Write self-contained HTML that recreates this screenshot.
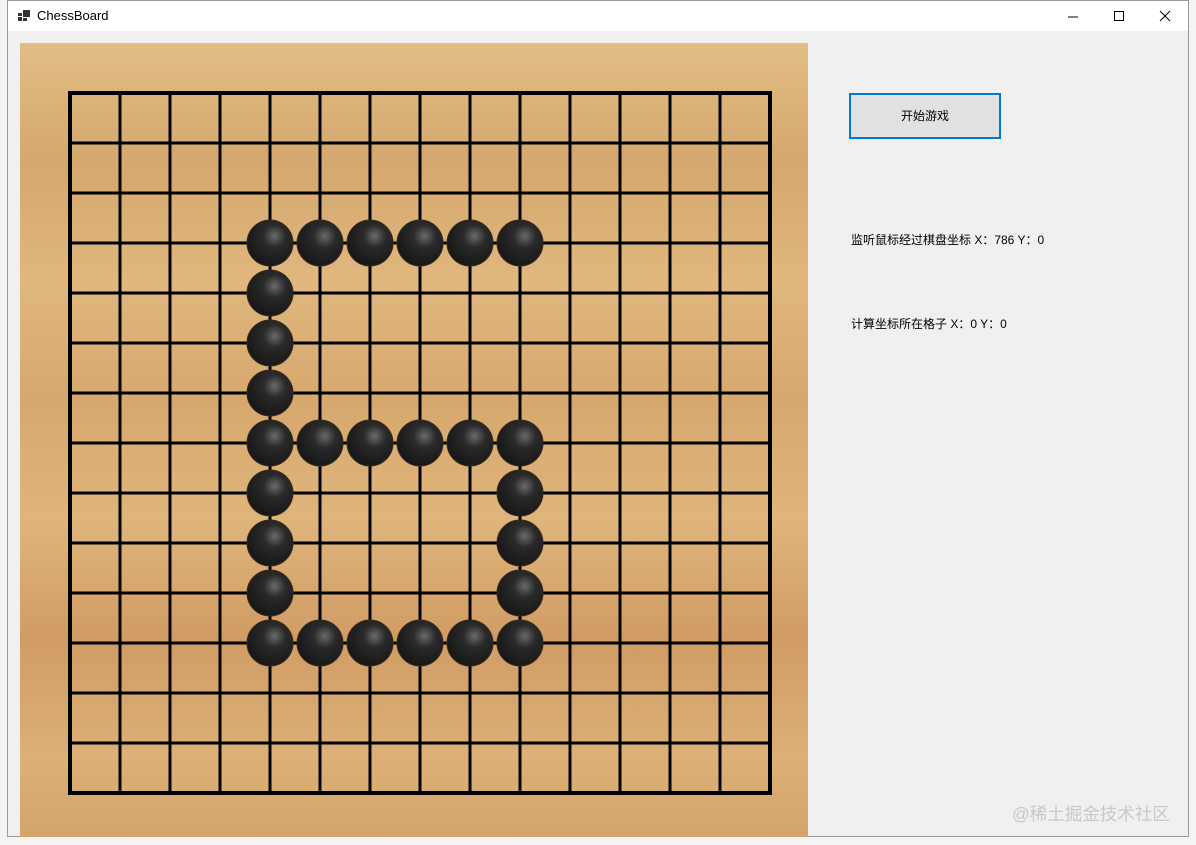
<!DOCTYPE html>
<html><head><meta charset="utf-8"><style>
body{margin:0;width:1196px;height:845px;background:#f4f4f4;position:relative;overflow:hidden;font-family:"Liberation Sans","Noto Sans CJK SC",sans-serif}
.win{position:absolute;left:7px;top:0;width:1182px;height:837px;background:#f0f0f0;border:1px solid #9a9a9a;box-sizing:border-box}
.title{position:absolute;left:0;top:0;right:0;height:30px;background:#fff}
.title span{position:absolute;left:29px;top:7px;font-size:13px;color:#000}
.txt{position:absolute;font-size:12px;color:#000}
.btn{position:absolute;left:849px;top:93px;width:152px;height:46px;box-sizing:border-box;border:2px solid #0078d7;background:#e1e1e1;font-size:12px;text-align:center;line-height:42px}
</style></head><body>
<div class="win">
<div class="title">
<svg style="position:absolute;left:10px;top:9px" width="12" height="11"><rect x="0" y="3" width="4" height="3" fill="#333"/><rect x="0" y="7" width="4" height="4" fill="#333"/><rect x="5" y="0" width="7" height="7" fill="#333"/><rect x="5" y="8" width="4" height="3" fill="#333"/></svg>
<span>ChessBoard</span>
<svg style="position:absolute;left:1060px;top:9px" width="120" height="14" stroke="#000" stroke-width="1" fill="none"><line x1="0" y1="7" x2="10" y2="7"/><rect x="46.5" y="1.5" width="9" height="9"/><line x1="92" y1="1" x2="102" y2="11"/><line x1="102" y1="1" x2="92" y2="11"/></svg>
</div>
</div>
<svg style="position:absolute;left:20px;top:43px" width="788" height="794">
<defs>
<linearGradient id="w" x1="0" y1="0" x2="0" y2="1">
<stop offset="0" stop-color="#e2bd86"/><stop offset="0.15" stop-color="#d4a86e"/><stop offset="0.3" stop-color="#e0b77e"/><stop offset="0.45" stop-color="#d6a86e"/><stop offset="0.6" stop-color="#dfb57c"/><stop offset="0.75" stop-color="#d09c64"/><stop offset="0.9" stop-color="#dcb078"/><stop offset="1" stop-color="#d3a46c"/>
</linearGradient>
<radialGradient id="s" cx="0.6" cy="0.35" r="0.7"><stop offset="0" stop-color="#6a6a6a"/><stop offset="0.35" stop-color="#2a2a2a"/><stop offset="1" stop-color="#151515"/></radialGradient>
</defs>
<rect width="788" height="794" fill="url(#w)"/>
<g stroke="#000" stroke-width="3" id="g"></g>
<g id="st"></g>
</svg>
<div class="btn">开始游戏</div>
<div class="txt" style="left:851px;top:231px">监听鼠标经过棋盘坐标 X：786 Y：0</div>
<div class="txt" style="left:851px;top:315px">计算坐标所在格子 X：0 Y：0</div>
<div class="txt" style="left:1012px;top:801px;font-size:17.5px;color:#c8c8c8">@稀土掘金技术社区</div>
<script>
var g=document.getElementById('g'),s='';
for(var i=0;i<15;i++){var p=50+i*50;s+='<line x1="'+p+'" y1="50" x2="'+p+'" y2="750"/><line x1="50" y1="'+p+'" x2="750" y2="'+p+'"/>';}
g.innerHTML=s+'<rect x="50" y="50" width="700" height="700" fill="none" stroke-width="4"/>';
var pts=[];for(var c=0;c<6;c++){pts.push([c,0],[c,4],[c,8]);}
[1,2,3,5,6,7].forEach(function(r){pts.push([0,r]);});[5,6,7].forEach(function(r){pts.push([5,r]);});
var t='';pts.forEach(function(p){t+='<circle cx="'+(250+p[0]*50)+'" cy="'+(200+p[1]*50)+'" r="23" fill="url(#s)" stroke="#3a2a1a" stroke-width="1"/>';});
document.getElementById('st').innerHTML=t;
</script>
</body></html>
